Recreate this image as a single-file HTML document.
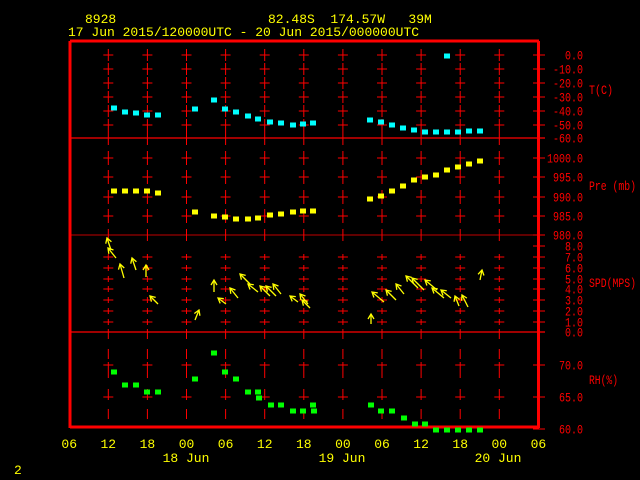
<!DOCTYPE html>
<html><head><meta charset="utf-8"><style>
html,body{margin:0;padding:0;background:#000;width:640px;height:480px;overflow:hidden}
svg{display:block}
text{font-family:"Liberation Mono",monospace;font-size:13px;white-space:pre}
#lab text,.rl{font-size:12.5px}
</style></head><body>
<svg id="s" width="640" height="480" xmlns="http://www.w3.org/2000/svg" xml:space="preserve">
<g fill="#ffff00">
<text x="85" y="23">8928</text>
<text x="268" y="23">82.48S  174.57W   39M</text>
<text x="68" y="36">17 Jun 2015/120000UTC - 20 Jun 2015/000000UTC</text>
</g>
<g id="grid" stroke="#ff0000" fill="none"></g>
<g fill="#ff0000" text-anchor="end" id="lab"></g>
<g fill="#ff0000">
<text class="rl" x="589" y="94" textLength="24" lengthAdjust="spacingAndGlyphs">T(C)</text>
<text class="rl" x="589" y="190" textLength="47" lengthAdjust="spacingAndGlyphs">Pre (mb)</text>
<text class="rl" x="589" y="287" textLength="47" lengthAdjust="spacingAndGlyphs">SPD(MPS)</text>
<text class="rl" x="589" y="384" textLength="29" lengthAdjust="spacingAndGlyphs">RH(%)</text>
</g>
<g fill="#ffff00" text-anchor="middle" id="bot"></g>
<g fill="#ffff00"><text x="14" y="474">2</text></g>
<g id="pts"></g>
<g id="wind" stroke="#ffff00" stroke-width="1.3" fill="none"></g>
</svg>
<script>
var NS="http://www.w3.org/2000/svg";
function el(p,t,a,txt){var e=document.createElementNS(NS,t);for(var k in a)e.setAttribute(k,a[k]);if(txt)e.textContent=txt;document.getElementById(p).appendChild(e);return e;}
function ln(x1,y1,x2,y2,w){el("grid","line",{x1:x1,y1:y1,x2:x2,y2:y2,"stroke-width":w||1});}
ln(70,41,539,41,3);ln(70,41,70,428,3);ln(538.5,41,538.5,428,3);ln(70,427,539,427,3);
ln(70,138,545,138,1.2);ln(70,235,545,235,0.8);ln(70,332,545,332,1.2);
var T=[55,69,83,97,111,125,138],P=[158,177,197,216,235],S=[246,257,268,279,289,300,311,322,332],R=[365,397,429];
var xs=[];for(var i=0;i<11;i++)xs.push(108.3+39.1*i);
xs.forEach(function(x){
 T.slice(0,6).forEach(function(y){ln(x,y-6,x,y+6);ln(x-5,y,x+5,y);});
 ln(x,131,x,145);
 P.slice(0,4).forEach(function(y){ln(x,y-7,x,y+7);ln(x-5,y,x+5,y);});
 ln(x,229,x,241);
 S.slice(1,8).forEach(function(y){ln(x,y-3,x,y+3);ln(x-5,y,x+5,y);});
 ln(x,329,x,339);ln(x,349,x,359);ln(x,362,x,378);ln(x-5,365,x+5,365);
 ln(x,389,x,400);ln(x-5,397,x+5,397);ln(x,409,x,419);
});
T.concat(P,S,R).forEach(function(y){ln(533,y,545,y);});
function lab(y,t){el("lab","text",{x:583,y:y+4.5,textLength:t.length*6,lengthAdjust:"spacingAndGlyphs"},t);}
var tl=["0.0","-10.0","-20.0","-30.0","-40.0","-50.0","-60.0"];T.forEach(function(y,i){lab(y,tl[i]);});
["1000.0","995.0","990.0","985.0","980.0"].forEach(function(t,i){lab(P[i],t);});
["8.0","7.0","6.0","5.0","4.0","3.0","2.0","1.0","0.0"].forEach(function(t,i){lab(S[i],t);});
["70.0","65.0","60.0"].forEach(function(t,i){lab(R[i],t);});
var hl=["06","12","18","00","06","12","18","00","06","12","18","00","06"];
hl.forEach(function(t,i){el("bot","text",{x:69.2+39.1*i,y:448},t);});
el("bot","text",{x:186,y:462},"18 Jun");el("bot","text",{x:342,y:462},"19 Jun");el("bot","text",{x:498,y:462},"20 Jun");
function pts(arr,c){arr.forEach(function(p){el("pts","rect",{x:p[0]-3,y:p[1]-2.5,width:6,height:5,fill:c});});}
pts([[114,108],[125,112],[136,113],[147,115],[158,115],[195,109],[214,100],[225,109],[236,112],[248,116],[258,119],[270,122],[281,123],[293,125],[303,124],[313,123],[370,120],[381,122],[392,125],[403,128],[414,130],[425,132],[436,132],[447,132],[458,132],[469,131],[480,131],[447,56]],"#00ffff");
pts([[114,191],[125,191],[136,191],[147,191],[158,193],[195,212],[214,216],[225,217],[236,219],[248,219],[258,218],[270,215],[281,214],[293,212],[303,211],[313,211],[370,199],[381,196],[392,191],[403,186],[414,180],[425,177],[436,175],[447,170],[458,167],[469,164],[480,161]],"#ffff00");
pts([[114,372],[125,385],[136,385],[147,392],[158,392],[195,379],[214,353],[225,372],[236,379],[248,392],[258,392],[259,398],[271,405],[281,405],[293,411],[303,411],[313,405],[314,411],[371,405],[381,411],[392,411],[404,418],[415,424],[425,424],[436,430],[447,430],[458,430],[469,430],[480,430]],"#00ff00");
var W=[[107,238,4,12],[108,248,8,10],[120,264,4,14],[132,258,4,12],[146,265,0,12],[150,296,8,8],[199,310,-4,10],[214,280,0,12],[218,298,8,6],[230,288,8,10],[240,274,10,10],[248,284,10,8],[260,286,10,10],[266,286,10,10],[273,284,8,10],[290,296,8,6],[300,294,8,10],[302,300,8,8],[371,314,0,10],[372,292,12,10],[386,290,10,10],[396,284,8,10],[406,276,12,12],[412,278,12,12],[425,280,12,10],[432,288,12,10],[441,290,10,8],[455,296,4,10],[462,295,6,12],[482,270,-2,10]];
W.forEach(function(w){var x=w[0],y=w[1],dx=w[2],dy=w[3];var L=Math.sqrt(dx*dx+dy*dy);var ux=dx/L,uy=dy/L;
 el("wind","line",{x1:x,y1:y,x2:x+dx,y2:y+dy});
 var hx=ux*5,hy=uy*5;
 el("wind","polyline",{points:(x+hx-uy*3)+","+(y+hy+ux*3)+" "+x+","+y+" "+(x+hx+uy*3)+","+(y+hy-ux*3)});
});
</script>
</body></html>
